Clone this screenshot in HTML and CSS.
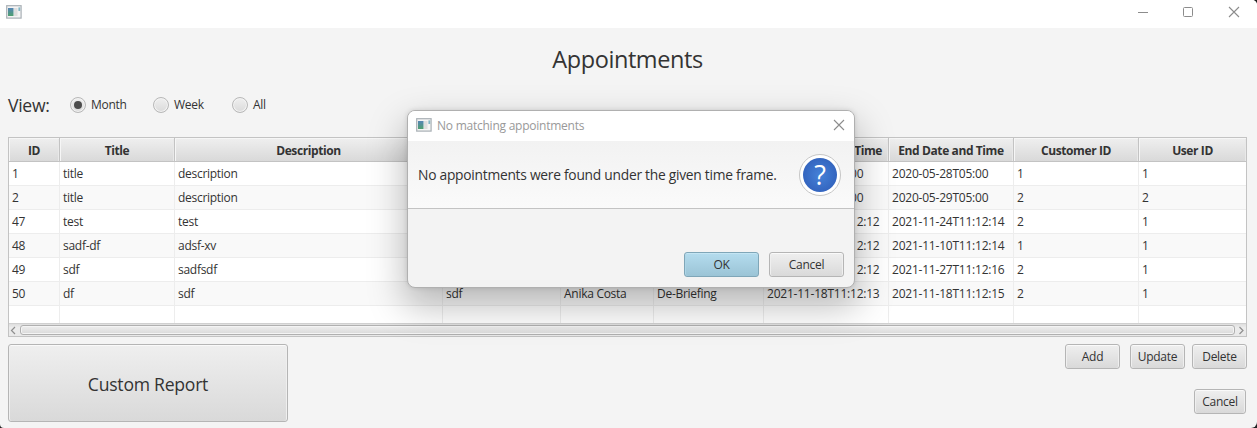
FILE: index.html
```
<!DOCTYPE html>
<html lang="en">
<head>
<meta charset="utf-8">
<title>Appointments</title>
<link rel="stylesheet" href="styles.css">
</head>
<body>
<svg width="0" height="0" class="defs">
  <defs>
    <linearGradient id="pane" x1="0" y1="0" x2="0" y2="1"><stop offset="0" stop-color="#5585b5"/><stop offset="1" stop-color="#4fa070"/></linearGradient>
    <symbol id="app" viewBox="0 0 16 14">
      <rect x=".7" y=".7" width="14.4" height="12.4" fill="#f4f4f4" stroke="#a9b0b5" stroke-width="1.2"/>
      <rect x="2" y="3" width="5.5" height="8" fill="url(#pane)"/>
      <rect x="8" y="3" width="3.5" height="8" fill="#dedede"/>
      <rect x="12.4" y="2.4" width="1.8" height="3.6" fill="#83b6c4"/>
    </symbol>
    <symbol id="close" viewBox="0 0 12 12"><path d="M1 1L11 11M11 1L1 11" fill="none" stroke="#8c8c8c" stroke-width="1.1"/></symbol>
  </defs>
</svg>
<div class="window">
  <header class="titlebar">
    <svg class="app-icon"><use href="#app"/></svg>
    <div class="controls">
      <svg width="12" height="12"><path d="M2 6.5H12" stroke="#8c8c8c"/></svg>
      <svg width="12" height="12"><rect x="1.5" y="1.5" width="9" height="9" rx="1" fill="none" stroke="#8c8c8c"/></svg>
      <svg width="12" height="12"><use href="#close"/></svg>
    </div>
  </header>
  <main class="content">
    <h1 class="heading"><span>Appointments</span></h1>
    <div class="view">
      <span class="view-label">View:</span>
      <span class="radio month"><i class="dot on"></i>Month</span>
      <span class="radio week"><i class="dot"></i>Week</span>
      <span class="radio"><i class="dot"></i>All</span>
    </div>
    <section class="table">
      <div class="row head"><b>ID</b><b>Title</b><b>Description</b><b>Location</b><b>Contact</b><b>Type</b><b>Start Date and Time</b><b>End Date and Time</b><b>Customer ID</b><b>User ID</b></div>
      <div class="rows">
        <div class="row"><span>1</span><span>title</span><span>description</span><span></span><span></span><span></span><span>2020-05-28T04:00</span><span>2020-05-28T05:00</span><span>1</span><span>1</span></div>
        <div class="row"><span>2</span><span>title</span><span>description</span><span></span><span></span><span></span><span>2020-05-29T04:00</span><span>2020-05-29T05:00</span><span>2</span><span>2</span></div>
        <div class="row"><span>47</span><span>test</span><span>test</span><span></span><span></span><span></span><span>2021-11-24T11:12:12</span><span>2021-11-24T11:12:14</span><span>2</span><span>1</span></div>
        <div class="row"><span>48</span><span>sadf-df</span><span>adsf-xv</span><span></span><span></span><span></span><span>2021-11-10T11:12:12</span><span>2021-11-10T11:12:14</span><span>1</span><span>1</span></div>
        <div class="row"><span>49</span><span>sdf</span><span>sadfsdf</span><span></span><span></span><span></span><span>2021-11-27T11:12:12</span><span>2021-11-27T11:12:16</span><span>2</span><span>1</span></div>
        <div class="row"><span>50</span><span>df</span><span>sdf</span><span>sdf</span><span>Anika Costa</span><span>De-Briefing</span><span>2021-11-18T11:12:13</span><span>2021-11-18T11:12:15</span><span>2</span><span>1</span></div>
        <div class="row"><span></span><span></span><span></span><span></span><span></span><span></span><span></span><span></span><span></span><span></span></div>
      </div>
      <div class="scrollbar">
        <svg width="11" height="13"><path d="M6 3L2.5 6.5L6 10" fill="none" stroke="#8f8f8f" stroke-width="1.2"/></svg>
        <div class="thumb"></div>
        <svg width="11" height="13"><path d="M4.5 3L8 6.5L4.5 10" fill="none" stroke="#8f8f8f" stroke-width="1.2"/></svg>
      </div>
    </section>
    <footer class="footer">
      <button class="btn report">Custom Report</button>
      <div class="actions">
        <div class="edit"><button class="btn add">Add</button><button class="btn update">Update</button><button class="btn delete">Delete</button></div>
        <button class="btn cancel">Cancel</button>
      </div>
    </footer>
  </main>
</div>
<div class="dialog">
  <header class="dialog-title">
    <svg class="app-icon"><use href="#app"/></svg>
    <span>No matching appointments</span>
    <svg class="dialog-close"><use href="#close"/></svg>
  </header>
  <div class="dialog-header">
    <p>No appointments were found under the given time frame.</p>
    <div class="question"><span>?</span></div>
  </div>
  <div class="dialog-buttons"><button class="btn ok">OK</button><button class="btn no">Cancel</button></div>
</div>
</body>
</html>
```
FILE: styles.css
```
* { box-sizing: border-box; }
body { margin: 0; width: 1257px; height: 428px; overflow: hidden; background: #222; color: #333; font: 12px/16px "Open Sans", "Noto Sans", sans-serif; letter-spacing: -0.28px; }
.defs { position: absolute; }
.window { height: 428px; background: #f4f4f4; border-radius: 0 5px 6px 4px; overflow: hidden; }
.titlebar { height: 28px; background: #fff; display: flex; justify-content: space-between; padding: 5px 17px 0 6px; }
.app-icon { width: 16px; height: 14px; flex: none; }
.controls { display: flex; gap: 34px; padding-top: 1px; }
.controls svg { display: block; }
.content { padding: 0 10px 0 8px; }
.heading { margin: 0; height: 62px; padding: 14px 0 0; text-align: center; font-size: 23.5px; line-height: 35px; font-weight: 400; letter-spacing: -0.42px; }
.view { height: 47px; padding-bottom: 17px; display: flex; align-items: center; }
.view-label { width: 62px; font-size: 17.6px; }
.radio { display: flex; align-items: center; gap: 5px; }
.month { width: 83px; }
.week { width: 79px; }
.dot { width: 16px; height: 16px; border: 1px solid #b8b8b8; border-radius: 50%; background: linear-gradient(#efefef, #dadada); box-shadow: inset 0 0 0 1px #f3f3f3; display: grid; place-items: center; }
.on::after { content: ""; width: 8px; height: 8px; border-radius: 50%; background: #4d4d4d; }
.table { height: 200px; width: 1239px; border: 1px solid #c3c3c3; background: #fff; }
.row { display: grid; grid-template-columns: 51px 115px 268px 118px 93px 110px 125px 125px 125px 107px; grid-template-rows: 24px; height: 24px; }
.rows { height: 161px; overflow: hidden; }
.row span { border-right: 1px solid #ededed; border-bottom: 1px solid #ededed; padding-left: 3px; line-height: 24px; white-space: nowrap; }
.row span:nth-child(7), .row span:nth-child(8) { letter-spacing: -0.22px; }
.row:nth-child(even) { background: #f9f9f9; }
.row span:last-child { border-right: 0; }
.head b { border-right: 1px solid #c3c3c3; border-bottom: 1px solid #c3c3c3; background: linear-gradient(#efefef, #d9d9d9); box-shadow: inset 1px 1px #f6f6f6, inset -1px 0 #e9e9e9; text-align: center; line-height: 26px; white-space: nowrap; letter-spacing: -0.4px; }
.head b:last-child { border-right: 0; }
.scrollbar { height: 13px; background: linear-gradient(#dedede, #ececec 30%, #e9e9e9); display: flex; align-items: center; border-top: 1px solid #d0d0d0; }
.thumb { flex: 1; height: 10px; border: 1px solid #b0b0b0; border-radius: 3px; background: linear-gradient(#eee, #dadada); box-shadow: inset 0 0 0 1px #f4f4f4; }
.footer { display: flex; justify-content: space-between; padding-top: 7px; }
.btn { font: inherit; color: #333; letter-spacing: inherit; height: 25px; padding: 0; border: 1px solid #b5b5b5; border-radius: 3px; background: linear-gradient(#efefef, #d9d9d9); box-shadow: inset 0 1px #fafafa, inset 1px 0 #efefef, inset -1px 0 #efefef; }
.report { width: 280px; height: 78px; padding-top: 1px; font-size: 17.6px; letter-spacing: -0.25px; }
.actions { display: flex; flex-direction: column; align-items: flex-end; gap: 20px; }
.edit { display: flex; }
.add { width: 55px; margin-right: 10px; }
.update { width: 55px; margin-right: 7px; }
.delete { width: 55px; }
.cancel { width: 52px; margin-right: 1px; }
.dialog { position: absolute; left: 407px; top: 110px; width: 448px; height: 178px; border: 1px solid #b0b0b0; border-radius: 8px; overflow: hidden; background: #f3f3f3; box-shadow: 0 16px 36px 3px rgba(0,0,0,.26), 0 0 5px rgba(0,0,0,.12); display: flex; flex-direction: column; }
.dialog-title { height: 30px; background: #fff; color: #999; display: flex; align-items: center; padding: 0 9px 0 8px; }
.dialog-title .app-icon { margin-top: -2px; }
.dialog-title span { margin-left: 5px; flex: 1; letter-spacing: -0.24px; }
.dialog-close { width: 12px; height: 12px; margin-top: -2px; }
.dialog-header { height: 68px; border-bottom: 1px solid #c3c3c3; background: linear-gradient(#f2f2f2, #fafafa); display: flex; align-items: center; justify-content: space-between; padding: 0 13px 0 10px; }
.dialog-header p { margin: 0; font-size: 13.8px; white-space: nowrap; letter-spacing: -0.26px; }
.question { width: 42px; height: 42px; border: 1px solid #c6c6c6; border-radius: 50%; background: #fff; padding: 3px; }
.question span { display: block; width: 34px; height: 34px; border-radius: 50%; background: radial-gradient(circle, #4682d8, #2c59b5); color: #fff; text-align: center; font-size: 27px; line-height: 34px; }
.dialog-buttons { display: flex; justify-content: flex-end; gap: 10px; padding: 43px 10px 0; }
.dialog-buttons .btn { width: 75px; }
.dialog-buttons .ok { border-color: #7fa6b8; background: linear-gradient(#b4dcee, #9bc4d6); box-shadow: inset 0 1px #c4e5f3, inset 1px 0 #aed5e6; }
```
